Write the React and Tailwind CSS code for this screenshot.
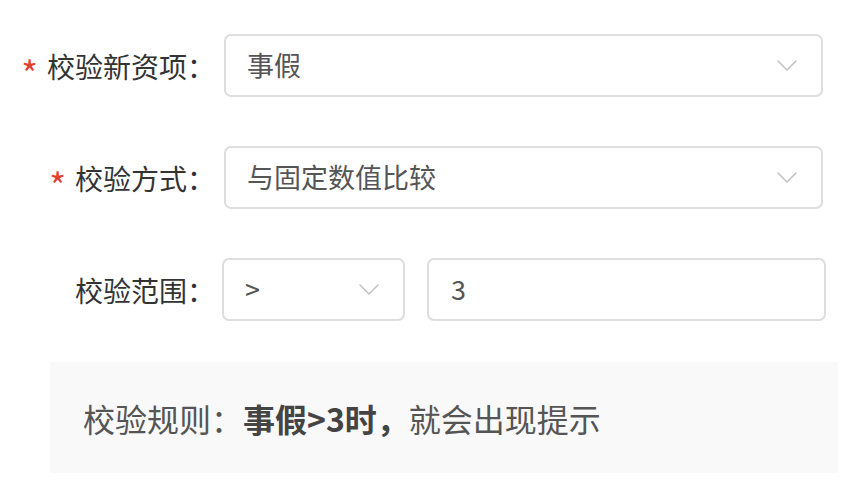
import React from 'react';

const font = { fontFamily: '"Noto Sans CJK SC", "Noto Sans", sans-serif' };

const Chevron = ({ className = '' }) => (
  <svg className={className} width="20" height="11" viewBox="0 0 20 11" fill="none">
    <path d="M1 1l9 9 9-9" stroke="#c2c2c2" strokeWidth="1.5" strokeLinecap="round" strokeLinejoin="round" />
  </svg>
);

const Label = ({ required, children }) => (
  <div className="w-[224px] shrink-0 flex justify-end items-center pr-[9px] text-[28px] text-[#333]">
    {required && <span className="text-[#e4412c] mr-[9px] text-[36px] leading-none relative top-[6px]">*</span>}
    <span>{children}</span>
  </div>
);

const Select = ({ value, className = '' }) => (
  <div className={`h-[63px] border-2 border-[#dedede] rounded-[7px] bg-white flex items-center justify-between pl-[21px] pr-[24px] ${className}`}>
    <span className="text-[27px] text-[#555]">{value}</span>
    <Chevron />
  </div>
);

const App = () => {
  return (
    <div className="w-[868px] h-[494px] bg-white pt-[34px]" style={font}>
      <div className="flex items-center h-[63px]">
        <Label required>校验新资项：</Label>
        <Select value="事假" className="w-[599px]" />
      </div>

      <div className="flex items-center h-[63px] mt-[49px]">
        <Label required>校验方式：</Label>
        <Select value="与固定数值比较" className="w-[599px]" />
      </div>

      <div className="flex items-center h-[63px] mt-[49px]">
        <Label>校验范围：</Label>
        <Select value=">" className="w-[183px] -ml-[2px]" />
        <div className="ml-[22px] w-[399px] h-[63px] border-2 border-[#dedede] rounded-[7px] flex items-center pl-[22px] text-[27px] text-[#555]">
          3
        </div>
      </div>

      <div className="ml-[50px] mt-[41px] w-[788px] h-[111px] bg-[#f9f9f9] flex items-center pl-[33px] text-[32px] text-[#555]">
        <span>校验规则：</span>
        <span className="font-bold text-[#444]">事假&gt;3时，</span>
        <span>就会出现提示</span>
      </div>
    </div>
  );
};

export default App;
